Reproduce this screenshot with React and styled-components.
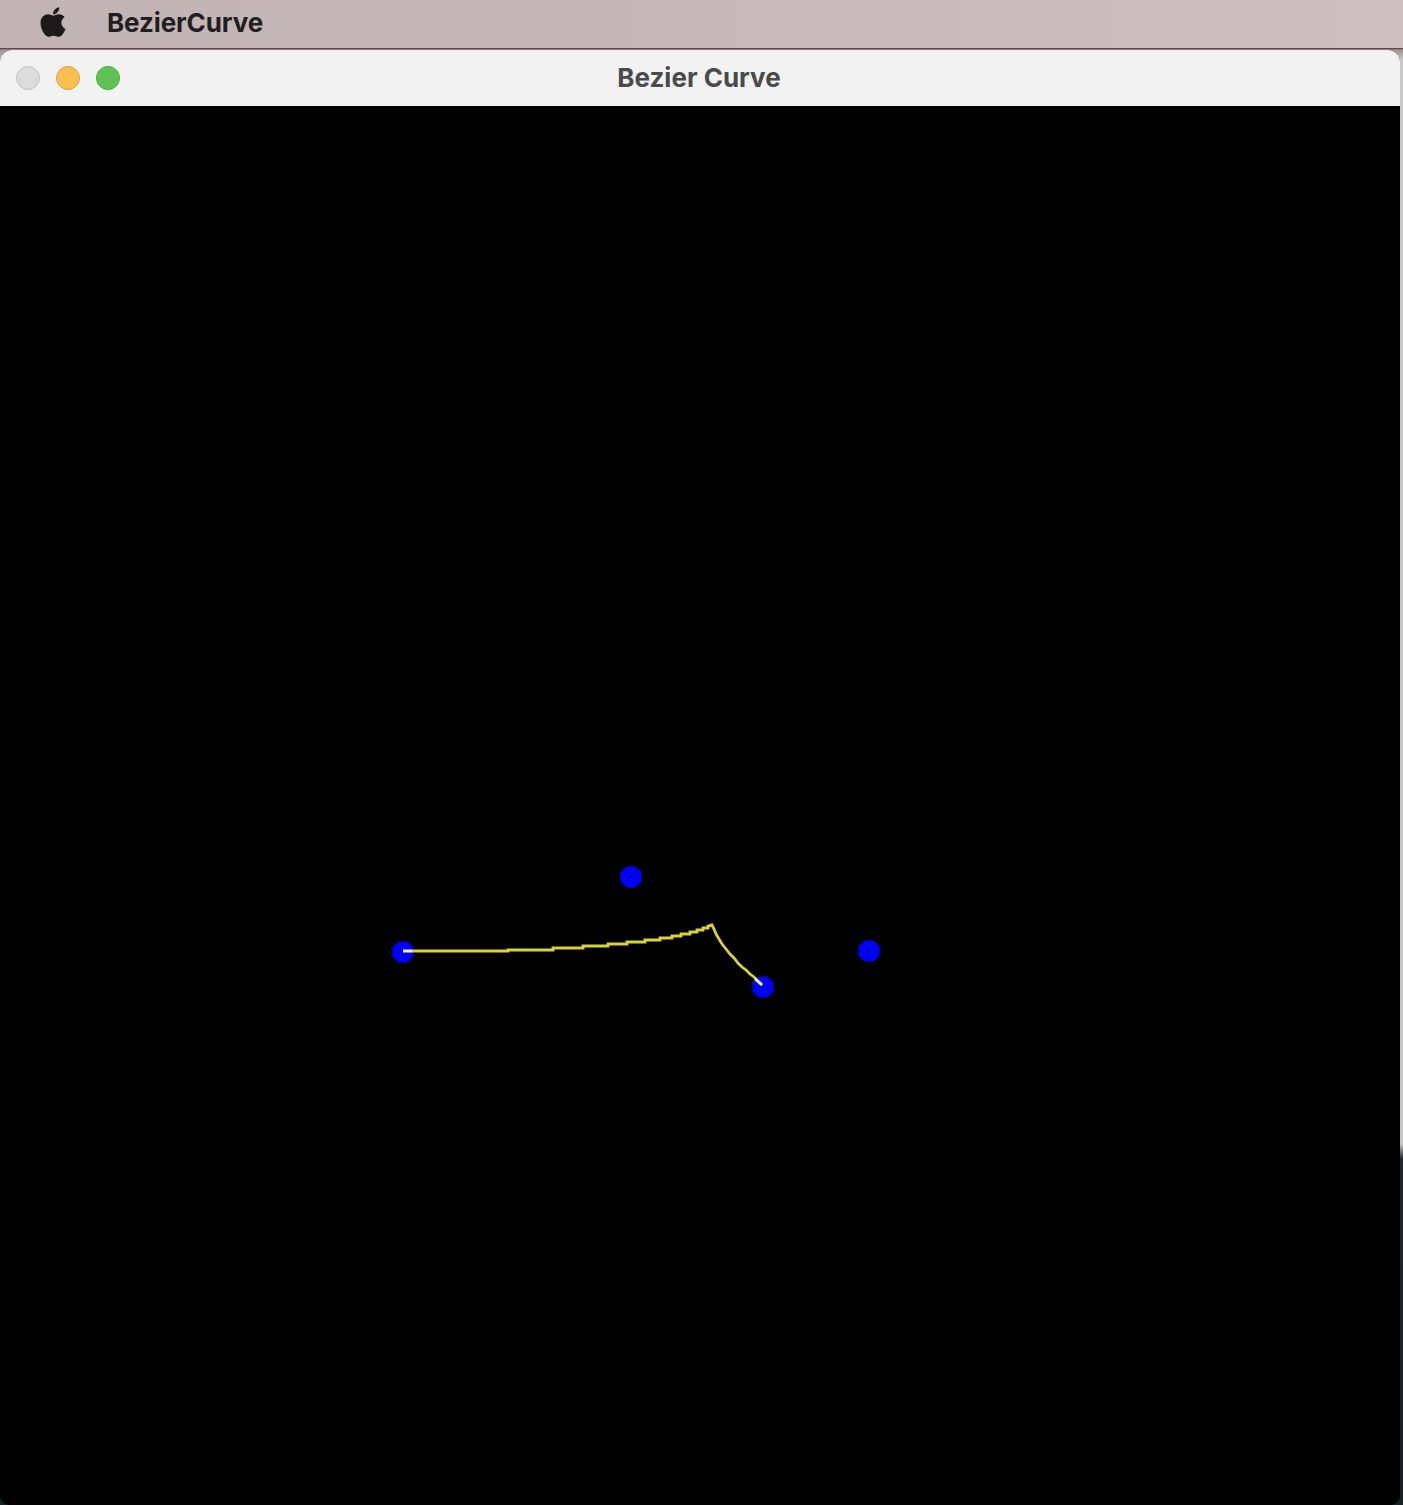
import React from "react";
import styled, { createGlobalStyle } from "styled-components";
import { FaApple } from "react-icons/fa";

const Global = createGlobalStyle`
  html, body { margin: 0; padding: 0; overflow: hidden; }
  body { font-family: Inter, "Open Sans", "Liberation Sans", sans-serif; }
`;

const Desktop = styled.div`
  width: 1403px;
  height: 1505px;
  display: flex;
  flex-direction: column;
  background: linear-gradient(180deg, #6b5a5c 0%, #8a7779 3%, #c9c9c9 4%, #c7c7c7 76%, #1c2a2e 77%, #142126 100%);
  overflow: hidden;
`;

const MenuBar = styled.div`
  height: 48px;
  flex: none;
  display: flex;
  align-items: center;
  background: linear-gradient(90deg, #c2b3b4 0%, #c6b8b9 50%, #cdbfbf 100%);
  padding-left: 36px;
  gap: 37px;
  box-shadow: 0 1px 0 #5a4a4b, 0 2px 0 #8d7d7e;
`;

const AppleMark = styled.span`
  display: flex;
  color: #1b1b1b;
  font-size: 34px;
  margin-top: -5px;
`;

const AppName = styled.span`
  font-size: 26px;
  font-weight: 700;
  color: #1f1f1f;
  letter-spacing: -0.1px;
  margin-top: -3px;
`;

const Window = styled.div`
  margin-top: 2px;
  width: 1400px;
  flex: 1;
  display: flex;
  flex-direction: column;
  border-radius: 12px 12px 10px 10px;
  overflow: hidden;
  background: #000;
`;

const TitleBar = styled.div`
  height: 56px;
  flex: none;
  position: relative;
  display: flex;
  align-items: center;
  justify-content: center;
  background: #f2f2f2;
`;

const Lights = styled.div`
  position: absolute;
  left: 16px;
  top: 16px;
  display: flex;
  gap: 16px;
`;

const Light = styled.span`
  width: 24px;
  height: 24px;
  border-radius: 50%;
  box-sizing: border-box;
  background: ${(p) => p.$fill};
  border: 1px solid ${(p) => p.$edge};
`;

const Title = styled.span`
  font-size: 26px;
  font-weight: 700;
  color: #4a4a4a;
  margin-left: -2px;
  margin-top: -1px;
`;

const Canvas = styled.div`
  flex: 1;
  background: #000;
  display: flex;
`;

const curve = [
  [403, 951], [508, 951], [508, 950], [553, 950], [553, 948], [583, 948], [583, 946],
  [608, 946], [608, 944], [627, 944], [627, 942], [645, 942], [645, 940], [660, 940],
  [660, 938], [672, 938], [672, 936], [681, 936], [681, 934], [690, 934], [690, 932],
  [697, 932], [697, 930], [703, 930], [703, 928], [708, 928], [708, 926], [712, 925],
  [714, 929], [716, 934], [719, 939], [722, 944], [726, 949], [730, 954], [734, 958],
  [738, 963], [742, 967], [746, 970], [750, 974], [754, 977], [758, 981], [762, 985],
];

const points = [
  [403, 952],
  [631, 877],
  [869, 951],
  [763, 987],
];

function octagon(cx, cy, r) {
  const pts = [];
  for (let i = 0; i < 8; i++) {
    const a = (Math.PI / 8) * (2 * i + 1);
    pts.push(`${(cx + r * Math.cos(a)).toFixed(1)},${(cy + r * Math.sin(a)).toFixed(1)}`);
  }
  return pts.join(" ");
}

function Drawing() {
  // coordinates are in page space; canvas starts at y=106
  return (
    <svg width="1400" height="1399" viewBox="0 106 1400 1399">
      {points.map(([x, y], i) => (
        <polygon key={i} points={octagon(x, y, 11.5)} fill="#0000ff" />
      ))}
      {points.map(([x, y], i) => (
        <rect key={"c" + i} x={x - 1} y={y - 1} width="2" height="2" fill="#00003a" />
      ))}
      <polyline
        points={curve.map((p) => p.join(",")).join(" ")}
        fill="none"
        stroke="#d9d23c"
        strokeWidth="2.8"
        strokeLinejoin="miter"
      />
      <line x1="403" y1="951" x2="412" y2="951" stroke="#eeeed0" strokeWidth="2.4" />
      <line x1="755" y1="979" x2="762" y2="985" stroke="#eeeed8" strokeWidth="2.4" />
    </svg>
  );
}

export default function App() {
  return (
    <>
      <Global />
      <Desktop>
        <MenuBar>
          <AppleMark>
            <FaApple />
          </AppleMark>
          <AppName>BezierCurve</AppName>
        </MenuBar>
        <Window>
          <TitleBar>
            <Lights>
              <Light $fill="#dcdcdc" $edge="#c2c2c2" />
              <Light $fill="#f6bf50" $edge="#dea23a" />
              <Light $fill="#5fc454" $edge="#4aa83f" />
            </Lights>
            <Title>Bezier Curve</Title>
          </TitleBar>
          <Canvas>
            <Drawing />
          </Canvas>
        </Window>
      </Desktop>
    </>
  );
}
